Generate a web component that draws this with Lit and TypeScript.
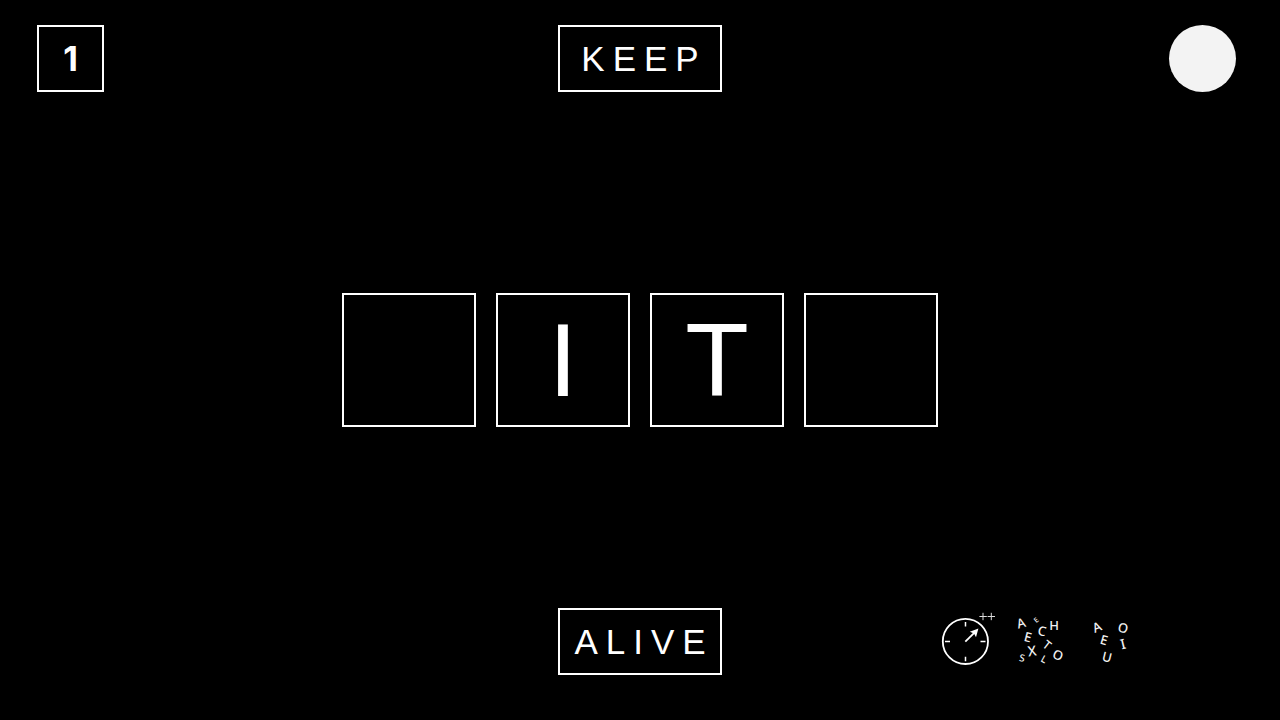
import { LitElement, html, svg, css } from "lit";
import { customElement, state } from "lit/decorators.js";

interface Glyph {
  char: string;
  x: number;
  y: number;
  turn: number;
  size: number;
}

const MIXED: Glyph[] = [
  { char: "A", x: 13, y: 15, turn: -16, size: 13 },
  { char: "E", x: 28, y: 12, turn: -40, size: 7 },
  { char: "C", x: 34, y: 23, turn: 12, size: 13 },
  { char: "H", x: 46, y: 17, turn: 0, size: 13 },
  { char: "E", x: 20, y: 29, turn: 14, size: 13 },
  { char: "T", x: 39, y: 37, turn: 38, size: 12 },
  { char: "X", x: 24, y: 43, turn: -8, size: 14 },
  { char: "S", x: 14, y: 50, turn: 10, size: 10 },
  { char: "L", x: 36, y: 51, turn: 28, size: 10 },
  { char: "O", x: 50, y: 47, turn: 22, size: 13 },
];

const VOWELS: Glyph[] = [
  { char: "A", x: 14, y: 19, turn: -22, size: 13 },
  { char: "O", x: 40, y: 20, turn: 14, size: 13 },
  { char: "E", x: 21, y: 32, turn: 16, size: 13 },
  { char: "I", x: 40, y: 36, turn: -14, size: 14 },
  { char: "U", x: 24, y: 49, turn: 14, size: 13 },
];

@customElement("letter-scatter")
export class LetterScatter extends LitElement {
  static properties = { glyphs: { attribute: false } };
  declare glyphs: Glyph[];

  static styles = css`
    :host { display: block; }
    .art { display: block; width: 64px; height: 64px; }
    .glyph {
      font-family: "Noto Sans", sans-serif;
      font-weight: 500;
      fill: #f2f2f2;
      text-anchor: middle;
    }
  `;

  render() {
    return html`<svg class="art" viewBox="0 0 64 64" aria-hidden="true">
      ${(this.glyphs ?? []).map(
        (g) => svg`<g transform="translate(${g.x} ${g.y}) rotate(${g.turn})">
          <text class="glyph" font-size=${g.size} y=${g.size * 0.36}>${g.char}</text>
        </g>`
      )}
    </svg>`;
  }
}

@customElement("app-root")
export class AppRoot extends LitElement {
  @state() private letters = ["", "I", "T", ""];

  static styles = css`
    :host {
      display: grid;
      grid-template-rows: 1fr auto 1fr;
      min-height: 100vh;
      box-sizing: border-box;
      background: #000;
      color: #fff;
      font-family: "Liberation Sans", Arial, sans-serif;
    }
    .top, .bottom {
      display: grid;
      grid-template-columns: 1fr auto 1fr;
      box-sizing: border-box;
      padding: 25px 37px 45px;
    }
    .top { align-items: start; }
    .bottom { align-items: end; }
    .frame {
      box-sizing: border-box;
      display: flex;
      align-items: center;
      justify-content: center;
      height: 67px;
      border: 2px solid #fff;
    }
    .level {
      width: 67px;
      font: 700 34px/40px Inter, sans-serif;
    }
    .word {
      width: 164px;
      margin: 0;
      font-size: 35px;
      font-weight: 400;
      line-height: 40px;
    }
    .letters {
      letter-spacing: 8px;
      padding-left: 8px;
    }
    .dot {
      justify-self: end;
      width: 67px;
      height: 67px;
      margin-right: 7px;
      padding: 0;
      border: 0;
      border-radius: 50%;
      background: #f3f3f3;
    }
    .tiles {
      display: flex;
      justify-content: center;
      gap: 20px;
    }
    .tile {
      box-sizing: border-box;
      width: 134px;
      height: 134px;
      padding: 0;
      border: 2px solid #fff;
      border-radius: 0;
      outline: 0;
      background: transparent;
      color: #fff;
      font: 400 104px/120px "Liberation Sans", Arial, sans-serif;
      text-align: center;
      text-transform: uppercase;
    }
    .bottom .word { grid-column: 2; }
    .tools {
      grid-column: 3;
      display: flex;
      justify-content: flex-end;
      gap: 11px;
      padding-right: 96px;
    }
    .tool {
      display: block;
      padding: 0 0 3px;
      border: 0;
      background: transparent;
      color: #fff;
    }
    .clock { display: block; width: 64px; height: 64px; }
  `;

  private type(i: number, e: Event) {
    const value = (e.target as HTMLInputElement).value;
    this.letters = this.letters.map((l, n) => (n === i ? value : l));
  }

  render() {
    return html`
      <header class="top">
        <div class="frame level">1</div>
        <h1 class="frame word"><span class="letters">KEEP</span></h1>
        <button class="dot" type="button" aria-label="Menu"></button>
      </header>
      <main class="tiles">
        ${this.letters.map(
          (l, i) => html`<input
            class="tile"
            type="text"
            maxlength="1"
            autocomplete="off"
            aria-label="Letter ${i + 1}"
            .value=${l}
            @input=${(e: Event) => this.type(i, e)}
          />`
        )}
      </main>
      <footer class="bottom">
        <h2 class="frame word"><span class="letters">ALIVE</span></h2>
        <div class="tools">
          <button class="tool" type="button" aria-label="More time">
            <svg class="clock" viewBox="0 0 64 64" fill="none" stroke="#fff" aria-hidden="true">
              <circle cx="32.4" cy="33.4" r="22.6" stroke-width="1.8" />
              <path d="M32.5 14v4.5M32.5 48.7v4.5M12 33.4h5M47.5 33.4h5" stroke-width="1.5" />
              <path d="M32.3 33.6L42 24.2" stroke-width="1.8" />
              <path d="M45.4 20.6L43 29.2L41 25.6L36.8 23.8Z" fill="#fff" stroke="none" />
              <path d="M46.4 8.5h7.4M50 4.8v7.4M54.6 8.5h7.4M58.3 4.8v7.4" stroke="#ddd" />
            </svg>
          </button>
          <button class="tool" type="button" aria-label="Shuffle letters">
            <letter-scatter .glyphs=${MIXED}></letter-scatter>
          </button>
          <button class="tool" type="button" aria-label="Show vowels">
            <letter-scatter .glyphs=${VOWELS}></letter-scatter>
          </button>
        </div>
      </footer>
    `;
  }
}
